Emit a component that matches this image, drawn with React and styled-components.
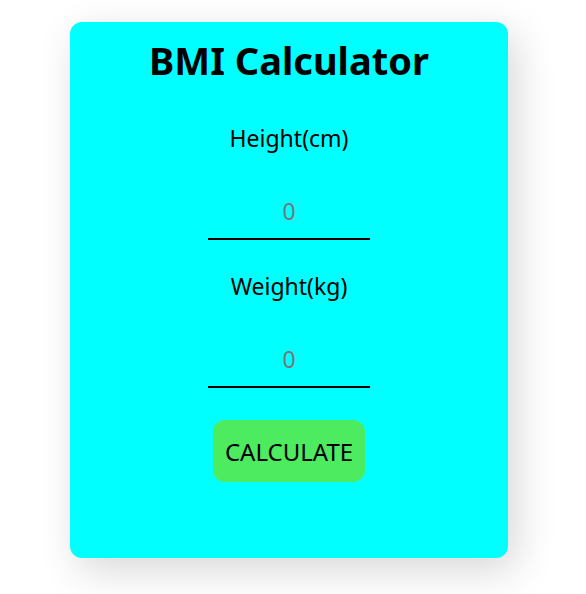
import React from "react";
import styled, { createGlobalStyle } from "styled-components";

const GlobalStyle = createGlobalStyle`
  body {
    margin: 0;
    background: #ffffff;
    font-family: "Noto Sans", "Open Sans", sans-serif;
  }
`;

const Page = styled.div`
  padding: 22px 0 36px 70px;
`;

const Card = styled.div`
  width: 438px;
  height: 536px;
  box-sizing: border-box;
  background-color: #00ffff;
  border-radius: 12px;
  box-shadow: 8px 12px 40px rgba(0, 0, 0, 0.16);
  display: flex;
  flex-direction: column;
  align-items: center;
  padding-top: 14px;
`;

const Title = styled.h1`
  margin: 0 0 39px;
  font-size: 38px;
  line-height: 48px;
  font-weight: 700;
  color: #000;
`;

const Form = styled.div`
  display: flex;
  flex-direction: column;
  align-items: center;
  gap: 31px;
`;

const Label = styled.label`
  font-size: 23px;
  line-height: 30px;
  color: #000;
`;

const Input = styled.input`
  width: 162px;
  height: 56px;
  box-sizing: border-box;
  border: none;
  border-bottom: 2px solid #000;
  background: transparent;
  outline: none;
  text-align: center;
  font-family: inherit;
  font-size: 23px;
  padding: 0;
  color: #000;
  -moz-appearance: textfield;

  &::-webkit-outer-spin-button,
  &::-webkit-inner-spin-button {
    -webkit-appearance: none;
    margin: 0;
  }

  &::placeholder {
    color: #777;
  }
`;

const Button = styled.button`
  margin-top: 1px;
  width: 152px;
  height: 62px;
  border: none;
  border-radius: 12px;
  background-color: #4deb5f;
  font-family: inherit;
  font-size: 24px;
  padding: 0;
  color: #000;
  cursor: pointer;
`;

export default function App() {
  return (
    <Page>
      <GlobalStyle />
      <Card>
        <Title>BMI Calculator</Title>
        <Form>
          <Label>Height(cm)</Label>
          <Input type="number" placeholder="0" />
          <Label>Weight(kg)</Label>
          <Input type="number" placeholder="0" />
          <Button>CALCULATE</Button>
        </Form>
      </Card>
    </Page>
  );
}
